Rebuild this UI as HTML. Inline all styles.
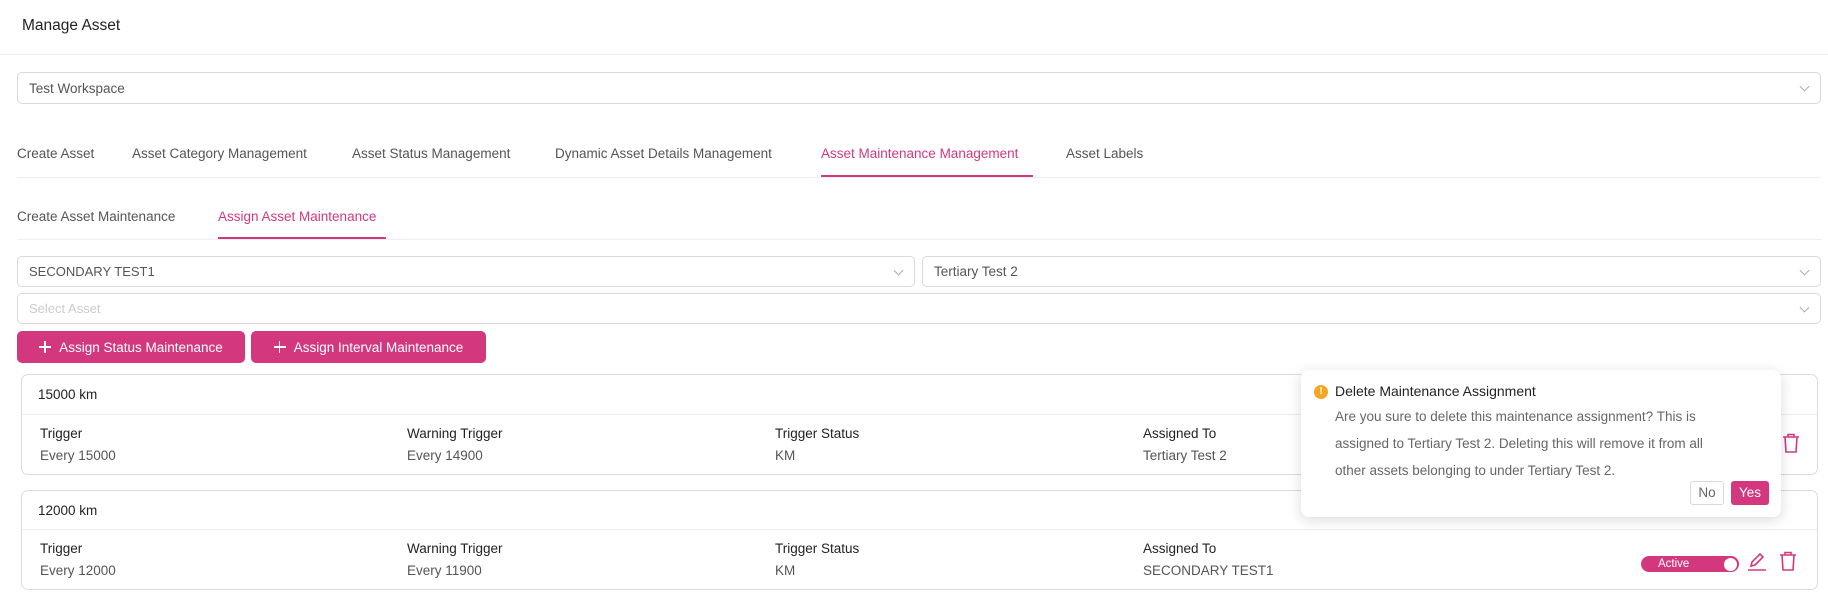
<!DOCTYPE html>
<html><head><meta charset="utf-8"><style>
*{box-sizing:border-box;margin:0;padding:0}
body{width:1828px;height:593px;background:#fff;font-family:"Liberation Sans",sans-serif;color:#555;font-size:13.5px;position:relative;overflow:hidden}
.a{position:absolute;white-space:nowrap}
.sel{position:absolute;border:1px solid #d9d9d9;border-radius:5px;background:#fff;padding-left:11px;display:flex;align-items:center;font-size:13.5px;color:#555}
.sel:after{content:"";position:absolute;right:12px;top:50%;width:6px;height:6px;border-right:1px solid #aaa;border-bottom:1px solid #aaa;transform:translateY(-70%) rotate(45deg)}
.btn{position:absolute;background:#d3387f;color:#fff;border-radius:5px;font-size:13.5px;display:flex;align-items:center;justify-content:center;gap:8px}
.pl{position:relative;width:12px;height:12px;display:inline-block}
.pl:before{content:"";position:absolute;left:5px;top:0;width:1.5px;height:12px;background:#fff}
.pl:after{content:"";position:absolute;left:0;top:5px;width:12px;height:1.5px;background:#fff}
.card{position:absolute;border:1px solid #dcdcdc;border-radius:7px;background:#fff}
.lbl{color:#222}
.pink{color:#d3387f}
</style></head><body>
<div class="a" style="left:22px;top:17px;font-size:15.5px;color:#222">Manage Asset</div>
<div class="a" style="left:0;top:54px;width:1828px;height:1px;background:#eee"></div>
<div class="sel" style="left:17px;top:72px;width:1804px;height:32px">Test Workspace</div>

<div class="a" style="left:17px;top:146px">Create Asset</div>
<div class="a" style="left:132px;top:146px">Asset Category Management</div>
<div class="a" style="left:352px;top:146px">Asset Status Management</div>
<div class="a" style="left:555px;top:146px">Dynamic Asset Details Management</div>
<div class="a pink" style="left:821px;top:146px">Asset Maintenance Management</div>
<div class="a" style="left:1066px;top:146px">Asset Labels</div>
<div class="a" style="left:17px;top:177px;width:1804px;height:1px;background:#eee"></div>
<div class="a" style="left:821px;top:175px;width:212px;height:2px;background:#d3387f"></div>

<div class="a" style="left:17px;top:209px">Create Asset Maintenance</div>
<div class="a pink" style="left:218px;top:209px">Assign Asset Maintenance</div>
<div class="a" style="left:17px;top:239px;width:1804px;height:1px;background:#eee"></div>
<div class="a" style="left:218px;top:237px;width:168px;height:2px;background:#d3387f"></div>

<div class="sel" style="left:17px;top:256px;width:898px;height:31px;font-size:13px">SECONDARY TEST1</div>
<div class="sel" style="left:922px;top:256px;width:899px;height:31px">Tertiary Test 2</div>
<div class="sel" style="left:17px;top:293px;width:1804px;height:31px;color:#ccc;font-size:13px">Select Asset</div>

<div class="btn" style="left:17px;top:331px;width:228px;height:32px"><span class="pl"></span>Assign Status Maintenance</div>
<div class="btn" style="left:251px;top:331px;width:235px;height:32px"><span class="pl"></span>Assign Interval Maintenance</div>

<div class="card" style="left:21px;top:374px;width:1797px;height:101px">
 <div class="a" style="left:16px;top:12px;color:#222">15000 km</div>
 <div class="a" style="left:0;top:39px;width:100%;height:1px;background:#eee"></div>
 <div class="a lbl" style="left:18px;top:51px">Trigger</div><div class="a" style="left:18px;top:73px">Every 15000</div>
 <div class="a lbl" style="left:385px;top:51px">Warning Trigger</div><div class="a" style="left:385px;top:73px">Every 14900</div>
 <div class="a lbl" style="left:753px;top:51px">Trigger Status</div><div class="a" style="left:753px;top:73px">KM</div>
 <div class="a lbl" style="left:1121px;top:51px">Assigned To</div><div class="a" style="left:1121px;top:73px">Tertiary Test 2</div>
 <svg class="a" style="left:1760px;top:58px" width="18" height="20" viewBox="0 0 18 20" fill="none" stroke="#d3387f" stroke-width="1.6"><path d="M1 4h16M6 4V1.5h6V4M3 4l1 15h10l1-15"/></svg>
</div>

<div class="card" style="left:21px;top:490px;width:1797px;height:100px">
 <div class="a" style="left:16px;top:12px;color:#222">12000 km</div>
 <div class="a" style="left:0;top:38px;width:100%;height:1px;background:#eee"></div>
 <div class="a lbl" style="left:18px;top:50px">Trigger</div><div class="a" style="left:18px;top:72px">Every 12000</div>
 <div class="a lbl" style="left:385px;top:50px">Warning Trigger</div><div class="a" style="left:385px;top:72px">Every 11900</div>
 <div class="a lbl" style="left:753px;top:50px">Trigger Status</div><div class="a" style="left:753px;top:72px">KM</div>
 <div class="a lbl" style="left:1121px;top:50px">Assigned To</div><div class="a" style="left:1121px;top:72px">SECONDARY TEST1</div>
 <div class="a" style="left:1619px;top:65px;width:98px;height:16px;border-radius:8px;background:#d3387f;color:#fff;font-size:11.5px;padding-left:17px;line-height:16px">Active<span style="position:absolute;right:2px;top:1.5px;width:13px;height:13px;border-radius:50%;background:#fff"></span></div>
 <svg class="a" style="left:1725px;top:60px" width="20" height="20" viewBox="0 0 20 20" fill="none" stroke="#d3387f" stroke-width="1.6"><path d="M4 15l1-4 8-8 3 3-8 8zM1 19h18"/></svg>
 <svg class="a" style="left:1757px;top:60px" width="18" height="20" viewBox="0 0 18 20" fill="none" stroke="#d3387f" stroke-width="1.6"><path d="M1 4h16M6 4V1.5h6V4M3 4l1 15h10l1-15"/></svg>
</div>

<div class="a" style="left:1301px;top:370px;width:480px;height:147px;background:#fff;border-radius:8px;box-shadow:0 3px 14px rgba(0,0,0,0.15)">
 <div class="a" style="left:13px;top:15px;width:14px;height:14px;border-radius:50%;background:#f5a623;color:#fff;font-size:10px;font-weight:bold;text-align:center;line-height:14px">!</div>
 <div class="a" style="left:34px;top:13px;color:#222;font-size:14px">Delete Maintenance Assignment</div>
 <div class="a" style="left:34px;top:33px;line-height:27px;font-size:13.5px;color:#666;white-space:normal;width:400px">Are you sure to delete this maintenance assignment? This is assigned to Tertiary Test 2. Deleting this will remove it from all other assets belonging to under Tertiary Test 2.</div>
 <div class="a" style="left:389px;top:111px;width:34px;height:24px;border:1px solid #d9d9d9;border-radius:3px;text-align:center;line-height:22px;color:#666">No</div>
 <div class="a" style="left:430px;top:111px;width:38px;height:24px;background:#d3387f;border-radius:3px;text-align:center;line-height:24px;color:#fff">Yes</div>
</div>
</body></html>
